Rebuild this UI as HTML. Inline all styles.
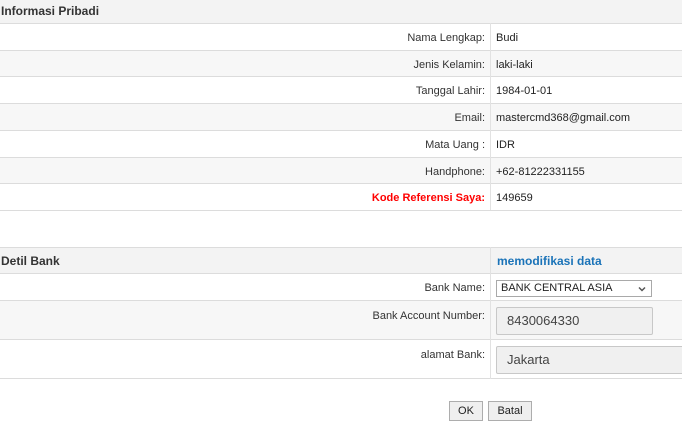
<!DOCTYPE html>
<html><head><meta charset="utf-8"><style>
*{margin:0;padding:0;box-sizing:border-box}
body{width:682px;height:424px;overflow:hidden;background:#fff;font-family:"Liberation Sans",sans-serif;font-size:11px;color:#333;position:relative}
.r{position:absolute;left:0;width:682px;border-bottom:1px solid #dcdcdc}
.h{background:#f3f3f3;font-weight:bold;color:#333;font-size:12px}
.g{background:#f7f7f7}
.l{position:absolute;right:197px;text-align:right}
.v{position:absolute;left:496px;color:#222}
.sep{position:absolute;left:490px;top:23px;width:1px;height:187px;background:#e2e2e2}
.sep2{position:absolute;left:490px;top:247px;width:1px;height:132px;background:#e2e2e2}
.in{position:absolute;background:#f0f0f0;border:1px solid #c8c8c8;border-radius:2px;font-size:13px;color:#444;padding-left:10px}
.btn{position:absolute;top:401px;height:20px;background:#efefef;border:1px solid #adadad;font-size:11px;color:#222;text-align:center;line-height:18px}
</style></head><body>
<div class="r h" style="top:0;height:24px;line-height:23px;padding-left:1px">Informasi Pribadi</div>
<div class="r" style="top:24px;height:27px"><span class="l" style="top:8px">Nama Lengkap:</span><span class="v" style="top:8px">Budi</span></div>
<div class="r g" style="top:51px;height:26px"><span class="l" style="top:8px">Jenis Kelamin:</span><span class="v" style="top:8px">laki-laki</span></div>
<div class="r" style="top:77px;height:27px"><span class="l" style="top:8px">Tanggal Lahir:</span><span class="v" style="top:8px">1984-01-01</span></div>
<div class="r g" style="top:104px;height:27px"><span class="l" style="top:8px">Email:</span><span class="v" style="top:8px">mastercmd368@gmail.com</span></div>
<div class="r" style="top:131px;height:27px"><span class="l" style="top:8px">Mata Uang :</span><span class="v" style="top:8px">IDR</span></div>
<div class="r g" style="top:158px;height:26px"><span class="l" style="top:8px">Handphone:</span><span class="v" style="top:8px">+62-81222331155</span></div>
<div class="r" style="top:184px;height:27px"><span class="l" style="top:8px;color:#f00;font-weight:bold">Kode Referensi Saya:</span><span class="v" style="top:8px">149659</span></div>
<div class="sep"></div>
<div class="r h" style="top:247px;height:27px;line-height:26px;padding-left:1px;border-top:1px solid #dcdcdc">Detil Bank<span style="position:absolute;left:497px;color:#1a73b8">memodifikasi data</span></div>
<div class="r" style="top:274px;height:27px"><span class="l" style="top:8px">Bank Name:</span></div>
<div class="r g" style="top:301px;height:39px"><span class="l" style="top:9px">Bank Account Number:</span></div>
<div class="r" style="top:340px;height:39px"><span class="l" style="top:9px">alamat Bank:</span></div>
<div class="sep2"></div>
<div style="position:absolute;left:496px;top:280px;width:156px;height:17px;border:1px solid #a9a9a9;background:#fff;font-size:11px;line-height:15px;padding-left:4px;color:#222">BANK CENTRAL ASIA<svg style="position:absolute;right:5px;top:5px" width="8" height="6" viewBox="0 0 8 6"><path d="M1 1.5 L4 4.5 L7 1.5" stroke="#555" stroke-width="1.5" fill="none"/></svg></div>
<div class="in" style="left:496px;top:307px;width:157px;height:28px;line-height:26px">8430064330</div>
<div class="in" style="left:496px;top:346px;width:190px;height:28px;line-height:26px">Jakarta</div>
<div class="btn" style="left:449px;width:34px">OK</div>
<div class="btn" style="left:488px;width:44px">Batal</div>
</body></html>
